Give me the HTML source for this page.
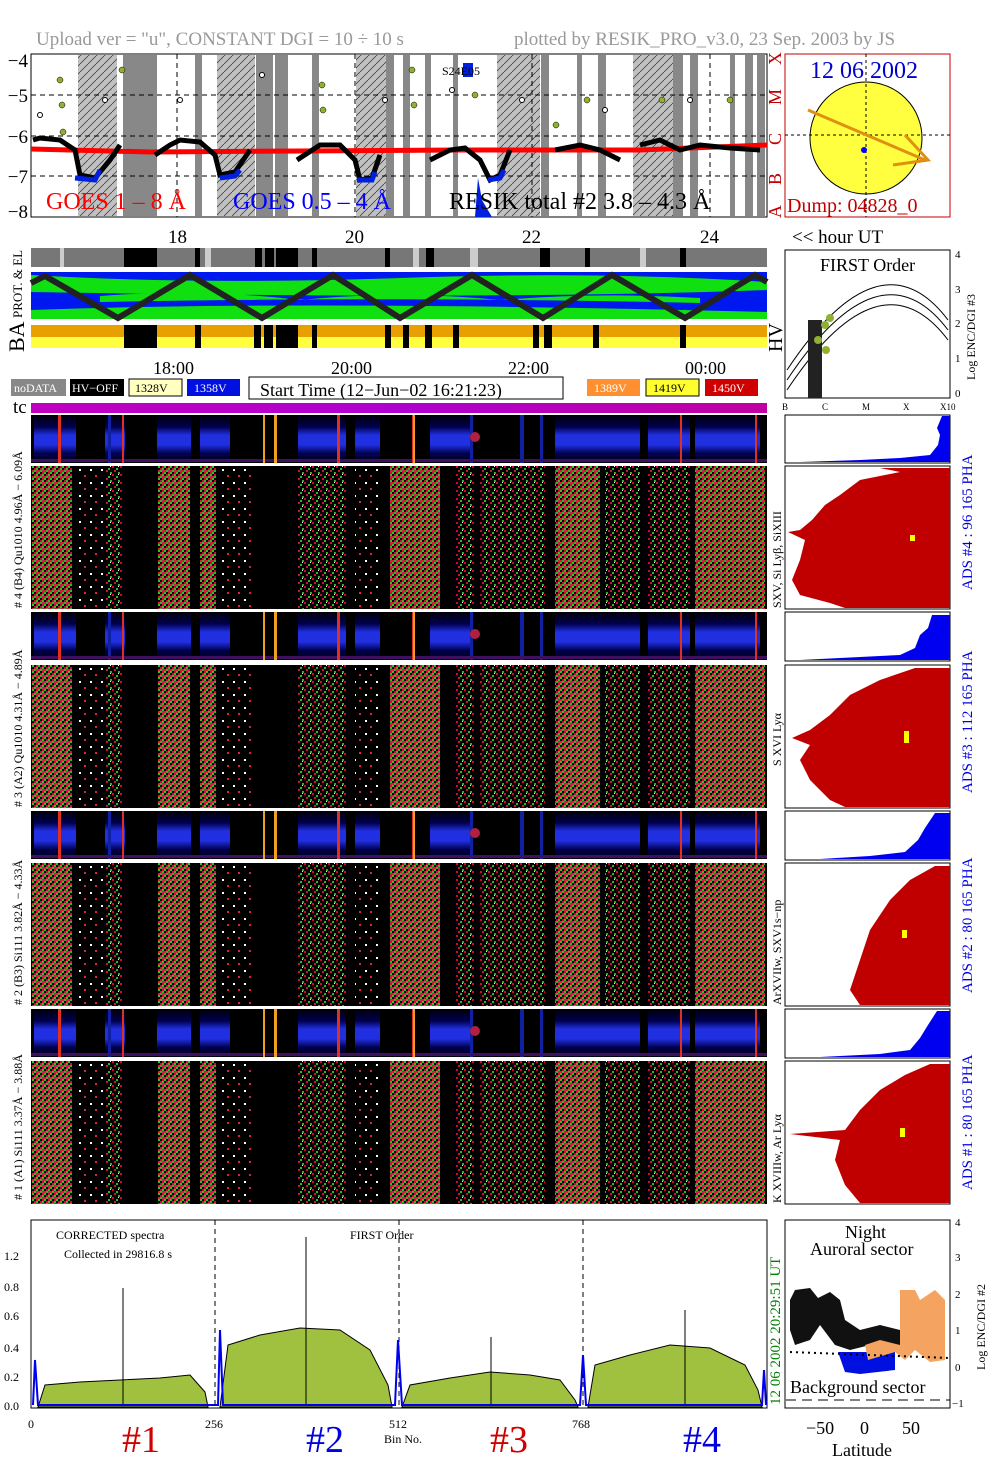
<!DOCTYPE html>
<html><head><meta charset="utf-8"><style>
html,body{margin:0;padding:0;background:#fff;}
svg{display:block;font-family:"Liberation Serif",serif;}
</style></head><body>
<svg width="1004" height="1477" viewBox="0 0 1004 1477" xmlns="http://www.w3.org/2000/svg">
<defs>
<pattern id="hatch" width="8" height="8" patternUnits="userSpaceOnUse"><rect width="8" height="8" fill="#c0c0c0"/><path d="M0 8L8 0" stroke="#333" stroke-width="0.7"/></pattern>
<pattern id="dense" width="6" height="6" patternUnits="userSpaceOnUse"><rect width="6" height="6" fill="#000"/><rect x="0" y="0" width="2" height="2" fill="#e80030"/><rect x="2" y="0" width="2" height="2" fill="#20d020"/><rect x="0" y="2" width="2" height="2" fill="#30c020"/><rect x="4" y="2" width="2" height="2" fill="#e00040"/><rect x="0" y="4" width="2" height="2" fill="#c02060"/><rect x="2" y="4" width="2" height="2" fill="#f01030"/><rect x="4" y="4" width="2" height="2" fill="#20c020"/></pattern>
<pattern id="mid" width="8" height="8" patternUnits="userSpaceOnUse"><rect width="8" height="8" fill="#000"/><rect x="0" y="0" width="2" height="2" fill="#e00030"/><rect x="4" y="2" width="2" height="2" fill="#20c020"/><rect x="2" y="4" width="2" height="2" fill="#d01040"/><rect x="6" y="6" width="2" height="2" fill="#30b020"/><rect x="6" y="0" width="1" height="1" fill="#fff"/></pattern>
<pattern id="sparse" width="11" height="13" patternUnits="userSpaceOnUse"><rect width="11" height="13" fill="#000"/><rect x="2" y="3" width="2" height="2" fill="#fff"/><rect x="7" y="9" width="2" height="2" fill="#e02040"/></pattern>
<linearGradient id="mag" x1="0" x2="1"><stop offset="0" stop-color="#c000c0"/><stop offset="0.5" stop-color="#b000d0"/><stop offset="1" stop-color="#c000a0"/></linearGradient>
<linearGradient id="bluev" x1="0" y1="0" x2="0" y2="1"><stop offset="0" stop-color="#000008"/><stop offset="0.25" stop-color="#000050"/><stop offset="0.42" stop-color="#2030e0"/><stop offset="0.62" stop-color="#2030e0"/><stop offset="0.8" stop-color="#000050"/><stop offset="1" stop-color="#000010"/></linearGradient>
<g id="dcols">
<rect x="32" y="0" width="40" height="143" fill="url(#dense)"/>
<rect x="76" y="0" width="28" height="143" fill="url(#sparse)"/>
<rect x="106" y="0" width="16" height="143" fill="url(#mid)"/>
<rect x="158" y="0" width="32" height="143" fill="url(#dense)"/>
<rect x="200" y="0" width="16" height="143" fill="url(#dense)"/>
<rect x="218" y="0" width="36" height="143" fill="url(#sparse)"/>
<rect x="298" y="0" width="48" height="143" fill="url(#mid)"/>
<rect x="355" y="0" width="25" height="143" fill="url(#sparse)"/>
<rect x="390" y="0" width="50" height="143" fill="url(#dense)"/>
<rect x="456" y="0" width="18" height="143" fill="url(#mid)"/>
<rect x="480" y="0" width="65" height="143" fill="url(#mid)"/>
<rect x="555" y="0" width="45" height="143" fill="url(#dense)"/>
<rect x="605" y="0" width="35" height="143" fill="url(#mid)"/>
<rect x="648" y="0" width="42" height="143" fill="url(#mid)"/>
<rect x="695" y="0" width="70" height="143" fill="url(#dense)"/>
</g>
<g id="pha">
<rect x="31" y="0" width="736" height="48" fill="#000"/>
<g fill="url(#bluev)">
<rect x="34" y="0" width="42" height="48"/><rect x="105" y="0" width="20" height="48"/>
<rect x="157" y="0" width="34" height="48"/><rect x="200" y="0" width="30" height="48"/>
<rect x="298" y="0" width="48" height="48"/><rect x="355" y="0" width="25" height="48"/>
<rect x="430" y="0" width="40" height="48"/><rect x="555" y="0" width="85" height="48"/>
<rect x="648" y="0" width="42" height="48"/><rect x="695" y="0" width="65" height="48"/>
</g>
<g fill="#1020a0"><rect x="470" y="0" width="3" height="48"/><rect x="520" y="0" width="4" height="48"/><rect x="540" y="0" width="3" height="48"/><rect x="108" y="0" width="3" height="48"/></g>
<rect x="31" y="44" width="736" height="3" fill="#401060"/>
<g fill="#e03020"><rect x="58" y="0" width="3" height="48"/><rect x="122" y="0" width="2" height="48"/><rect x="337" y="0" width="3" height="48"/><rect x="412" y="0" width="3" height="48"/><rect x="680" y="0" width="2" height="48"/><rect x="755" y="0" width="2" height="48"/></g>
<g fill="#f0a020"><rect x="263" y="0" width="2" height="48"/><rect x="274" y="0" width="3" height="48"/><rect x="413" y="0" width="2" height="48"/></g>
<ellipse cx="475" cy="22" rx="5" ry="5" fill="#b02040"/>
</g>
</defs>

<text x="36" y="45" font-size="19" fill="#999">Upload ver = "u", CONSTANT  DGI =  10 ÷  10 s</text>
<text x="514" y="45" font-size="19" fill="#999">plotted by RESIK_PRO_v3.0, 23 Sep. 2003 by JS</text>

<rect x="31" y="54" width="736" height="163" fill="#fff" stroke="#000"/>
<g fill="url(#hatch)"><rect x="78" y="55" width="39" height="161"/><rect x="217" y="55" width="38" height="161"/><rect x="356" y="55" width="30" height="161"/><rect x="497" y="55" width="43" height="161"/><rect x="633" y="55" width="40" height="161"/></g>
<g fill="#888"><rect x="123" y="55" width="34" height="161"/><rect x="195" y="55" width="7" height="161"/><rect x="256" y="55" width="17" height="161"/><rect x="275" y="55" width="13" height="161"/><rect x="312" y="55" width="7" height="161"/><rect x="386" y="55" width="8" height="161"/><rect x="403" y="55" width="7" height="161"/><rect x="425" y="55" width="6" height="161"/><rect x="453" y="55" width="5" height="161"/><rect x="541" y="55" width="8" height="161"/><rect x="577" y="55" width="5" height="161"/><rect x="598" y="55" width="8" height="161"/><rect x="673" y="55" width="10" height="161"/><rect x="690" y="55" width="8" height="161"/><rect x="730" y="55" width="5" height="161"/><rect x="745" y="55" width="8" height="161"/><rect x="757" y="55" width="8" height="161"/></g>
<g stroke="#000" stroke-dasharray="5,4" stroke-width="1"><line x1="31" y1="95" x2="767" y2="95"/><line x1="31" y1="136" x2="767" y2="136"/><line x1="31" y1="176" x2="767" y2="176"/><line x1="177" y1="54" x2="177" y2="217"/><line x1="355" y1="54" x2="355" y2="217"/><line x1="532" y1="54" x2="532" y2="217"/><line x1="710" y1="54" x2="710" y2="217"/></g>
<path d="M31 149 L150 152 L300 151 L460 150 L640 150 L767 145" stroke="#f00" stroke-width="5" fill="none"/>
<path d="M33 140 L40 138 L60 140 L75 150 L80 175 L95 178 L110 160 L120 145 M155 155 L170 145 L180 140 L200 142 L215 155 L220 175 L235 172 L250 150 M297 160 L320 145 L340 145 L355 160 L360 180 L372 178 L380 155 M430 160 L450 150 L465 148 L480 160 L490 180 L500 175 L510 150 M555 150 L580 145 L600 150 L620 160 M640 145 L660 140 L680 150 L700 145 L730 148 L760 150" stroke="#000" stroke-width="5" fill="none"/>
<path d="M75 178 L95 180 L100 170 M220 178 L235 176 L240 170 M357 180 L372 180 L375 172 M488 180 L500 178 L504 170" stroke="#0020e0" stroke-width="5" fill="none"/>
<g fill="#90b030" stroke="#000" stroke-width="0.5"><circle cx="60" cy="80" r="3"/><circle cx="62" cy="105" r="3"/><circle cx="63" cy="132" r="3"/><circle cx="122" cy="70" r="3"/><circle cx="322" cy="85" r="3"/><circle cx="323" cy="110" r="3"/><circle cx="412" cy="70" r="3"/><circle cx="414" cy="105" r="3"/><circle cx="475" cy="95" r="3"/><circle cx="587" cy="100" r="3"/><circle cx="662" cy="100" r="3"/><circle cx="730" cy="100" r="3"/><circle cx="556" cy="125" r="3"/></g>
<g fill="#fff" stroke="#000"><circle cx="40" cy="115" r="2.5"/><circle cx="105" cy="100" r="2.5"/><circle cx="180" cy="100" r="2.5"/><circle cx="262" cy="75" r="2.5"/><circle cx="385" cy="100" r="2.5"/><circle cx="452" cy="90" r="2.5"/><circle cx="522" cy="100" r="2.5"/><circle cx="605" cy="110" r="2.5"/><circle cx="690" cy="100" r="2.5"/></g>
<path d="M475 217 L478 178 L482 200 L492 217 Z" fill="#0020e0"/>
<rect x="463" y="63" width="10" height="14" fill="#0020e0"/>
<text x="442" y="75" font-size="12">S24E05</text>
<text x="46" y="209" font-size="24" fill="#f00">GOES 1 – 8 Å</text>
<text x="233" y="209" font-size="24" fill="#00f">GOES 0.5 – 4 Å</text>
<text x="449" y="209" font-size="24">RESIK total #2  3.8 – 4.3 Å</text>
<g font-size="19" text-anchor="end"><text x="28" y="67">−4</text><text x="28" y="102">−5</text><text x="28" y="143">−6</text><text x="28" y="183">−7</text><text x="28" y="218">−8</text></g>
<g font-size="18" fill="#c00000" transform="rotate(-90)"><text x="-218" y="781">A</text><text x="-185" y="781">B</text><text x="-145" y="781">C</text><text x="-105" y="781">M</text><text x="-65" y="781">X</text></g>
<rect x="785" y="54" width="165" height="163" fill="#fff" stroke="#c00000"/>
<circle cx="866" cy="138" r="56" fill="#ffff40" stroke="#000"/>
<line x1="785" y1="135" x2="950" y2="135" stroke="#000" stroke-dasharray="3,3"/><line x1="866" y1="54" x2="866" y2="217" stroke="#000" stroke-dasharray="3,3"/>
<path d="M808 110 L925 160 M893 165 L928 160 L905 135" stroke="#e09010" stroke-width="3" fill="none"/>
<circle cx="864" cy="150" r="3" fill="#00f"/>
<text x="810" y="78" font-size="24" fill="#0000d0">12 06 2002</text>
<text x="787" y="212" font-size="20" fill="#c00000">Dump: 04828_0</text>
<g font-size="19"><text x="168" y="243">18</text><text x="345" y="243">20</text><text x="522" y="243">22</text><text x="700" y="243">24</text><text x="792" y="243">&lt;&lt; hour UT</text></g>
<rect x="31" y="248" width="736" height="19" fill="#777"/>
<g fill="#000"><rect x="124" y="248" width="33" height="19"/><rect x="195" y="248" width="5" height="19"/><rect x="255" y="248" width="7" height="19"/><rect x="265" y="248" width="9" height="19"/><rect x="276" y="248" width="22" height="19"/><rect x="312" y="248" width="5" height="19"/><rect x="385" y="248" width="5" height="19"/><rect x="426" y="248" width="8" height="19"/><rect x="540" y="248" width="10" height="19"/><rect x="585" y="248" width="5" height="19"/><rect x="680" y="248" width="6" height="19"/></g>
<g fill="#ccc"><rect x="60" y="248" width="4" height="19"/><rect x="205" y="248" width="6" height="19"/><rect x="413" y="248" width="6" height="19"/><rect x="470" y="248" width="8" height="19"/><rect x="640" y="248" width="6" height="19"/></g>
<rect x="31" y="272" width="736" height="47" fill="#0018f0"/>
<path d="M31 275 Q200 285 400 278 T767 282 L767 290 Q500 300 31 292 Z M31 310 Q300 300 767 312 L767 319 L31 319 Z M100 296 Q200 288 300 300 Q400 290 500 300 Q600 292 700 298 L700 303 Q400 296 100 302Z" fill="#10e010"/>
<path d="M31 283 L45 276 L118 318 L190 275 L262 318 L333 275 L400 318 L472 275 L543 318 L612 275 L685 318 L755 275 L767 282" stroke="#222" stroke-width="6" fill="none"/>
<rect x="31" y="325" width="736" height="23" fill="#e8a000"/><rect x="31" y="337" width="736" height="11" fill="#ffff40"/>
<g fill="#000"><rect x="124" y="325" width="33" height="23"/><rect x="195" y="325" width="6" height="23"/><rect x="254" y="325" width="7" height="23"/><rect x="264" y="325" width="9" height="23"/><rect x="276" y="325" width="22" height="23"/><rect x="312" y="325" width="5" height="23"/><rect x="385" y="325" width="6" height="23"/><rect x="403" y="325" width="6" height="23"/><rect x="425" y="325" width="7" height="23"/><rect x="453" y="325" width="6" height="23"/><rect x="533" y="325" width="6" height="23"/><rect x="544" y="325" width="8" height="23"/><rect x="593" y="325" width="6" height="23"/><rect x="680" y="325" width="6" height="23"/></g>
<text transform="translate(22,318) rotate(-90)" font-size="13">PROT. &amp; EL</text>
<text transform="translate(24,352) rotate(-90)" font-size="22">BA</text>
<text transform="translate(782,352) rotate(-90)" font-size="20">HV</text>
<rect x="785" y="250" width="165" height="148" fill="#fff" stroke="#000"/>
<text x="820" y="271" font-size="18">FIRST Order</text>
<path d="M787 380 Q880 240 948 330 M787 370 Q880 230 948 320 M787 390 Q880 250 948 340" stroke="#000" fill="none"/>
<rect x="808" y="320" width="14" height="78" fill="#222"/>
<g fill="#90b030"><circle cx="825" cy="325" r="4"/><circle cx="830" cy="318" r="4"/><circle cx="818" cy="340" r="4"/><circle cx="826" cy="350" r="4"/></g>
<g font-size="9"><text x="782" y="410">B</text><text x="822" y="410">C</text><text x="862" y="410">M</text><text x="903" y="410">X</text><text x="940" y="410">X10</text></g>
<g font-size="11"><text x="955" y="258">4</text><text x="955" y="293">3</text><text x="955" y="327">2</text><text x="955" y="362">1</text><text x="955" y="397">0</text></g>
<text transform="translate(975,380) rotate(-90)" font-size="12">Log ENC/DGI #3</text>
<g font-size="18"><text x="153" y="374">18:00</text><text x="331" y="374">20:00</text><text x="508" y="374">22:00</text><text x="685" y="374">00:00</text></g>
<g font-size="12"><rect x="11" y="379" width="55" height="17" fill="#888"/><text x="14" y="392" fill="#fff">noDATA</text>
<rect x="70" y="379" width="54" height="17" fill="#000"/><text x="72" y="392" fill="#fff">HV−OFF</text>
<rect x="129" y="379" width="53" height="17" fill="#ffffc0" stroke="#000"/><text x="135" y="392">1328V</text>
<rect x="187" y="379" width="53" height="17" fill="#0010e0"/><text x="194" y="392" fill="#fff">1358V</text>
<rect x="587" y="379" width="53" height="17" fill="#ff9030"/><text x="594" y="392" fill="#fff">1389V</text>
<rect x="646" y="379" width="53" height="17" fill="#ffff30" stroke="#000"/><text x="653" y="392" fill="#000">1419V</text>
<rect x="705" y="379" width="53" height="17" fill="#d00000"/><text x="712" y="392" fill="#fff">1450V</text></g>
<rect x="249" y="377" width="314" height="22" fill="#fff" stroke="#000"/>
<text x="260" y="396" font-size="18">Start Time (12−Jun−02 16:21:23)</text>
<text x="13" y="413" font-size="19">tc</text>
<rect x="31" y="403" width="736" height="10" fill="url(#mag)"/>

<use href="#pha" y="415"/>
<rect x="31" y="466" width="736" height="143" fill="#000"/>
<use href="#dcols" y="466"/>
<use href="#pha" y="612"/>
<rect x="31" y="665" width="736" height="143" fill="#000"/>
<use href="#dcols" y="665"/>
<use href="#pha" y="811"/>
<rect x="31" y="863" width="736" height="143" fill="#000"/>
<use href="#dcols" y="863"/>
<use href="#pha" y="1009"/>
<rect x="31" y="1061" width="736" height="143" fill="#000"/>
<use href="#dcols" y="1061"/>

<g font-size="12">
<text transform="translate(22,608) rotate(-90)"># 4 (B4) Qu1010 4.96Å − 6.09Å</text>
<text transform="translate(22,807) rotate(-90)"># 3 (A2) Qu1010  4.31Å − 4.89Å</text>
<text transform="translate(22,1005) rotate(-90)"># 2 (B3) Si111  3.82Å − 4.33Å</text>
<text transform="translate(22,1200) rotate(-90)"># 1 (A1) Si111  3.37Å − 3.88Å</text>
<text transform="translate(781,608) rotate(-90)">SXV, Si Lyβ, SiXIII</text>
<text transform="translate(781,766) rotate(-90)">S XVI Lyα</text>
<text transform="translate(781,1005) rotate(-90)">ArXVIIw, SXV1s−np</text>
<text transform="translate(781,1203) rotate(-90)">K XVIIIw, Ar Lyα</text>
</g>
<g font-size="15" fill="#0000e0">
<text transform="translate(972,590) rotate(-90)">ADS #4 :   96 165  PHA</text>
<text transform="translate(972,793) rotate(-90)">ADS #3 :   112 165   PHA</text>
<text transform="translate(972,993) rotate(-90)">ADS #2 :   80 165    PHA</text>
<text transform="translate(972,1190) rotate(-90)">ADS #1 :   80 165    PHA</text>
</g>
<g stroke="#000" fill="#fff">
<rect x="785" y="415" width="165" height="48"/><rect x="785" y="466" width="165" height="143"/>
<rect x="785" y="612" width="165" height="49"/><rect x="785" y="665" width="165" height="143"/>
<rect x="785" y="811" width="165" height="49"/><rect x="785" y="863" width="165" height="143"/>
<rect x="785" y="1009" width="165" height="49"/><rect x="785" y="1061" width="165" height="143"/>
</g>
<g fill="#0000f0">
<path d="M800 462 L860 460 L900 458 L930 455 L938 445 L940 435 L937 428 L942 416 L950 416 L950 462Z"/>
<path d="M800 660 L860 657 L900 655 L915 648 L920 635 L928 628 L932 615 L950 615 L950 660Z"/>
<path d="M820 859 L870 856 L905 852 L918 840 L925 828 L935 813 L950 813 L950 859Z"/>
<path d="M820 1057 L880 1054 L910 1050 L920 1038 L928 1025 L937 1011 L950 1011 L950 1057Z"/>
</g>
<g fill="#c00000">
<path d="M950 468 L880 468 L900 472 L860 480 L840 495 L825 505 L812 520 L800 530 L788 532 L805 540 L800 560 L792 580 L800 595 L830 603 L845 608 L950 608Z"/>
<path d="M950 668 L915 668 L880 680 L850 695 L830 715 L810 730 L792 738 L810 745 L800 760 L810 780 L830 800 L845 807 L950 807Z"/>
<path d="M950 866 L935 866 L910 880 L890 900 L870 930 L860 960 L850 990 L860 1005 L950 1005Z"/>
<path d="M950 1064 L930 1064 L905 1075 L880 1090 L860 1110 L845 1130 L790 1134 L840 1140 L835 1160 L845 1185 L860 1203 L950 1203Z"/>
</g>
<g fill="#ffff00"><rect x="910" y="535" width="5" height="6"/><rect x="904" y="731" width="5" height="12"/><rect x="902" y="930" width="5" height="8"/><rect x="900" y="1128" width="5" height="9"/></g>

<rect x="31" y="1220" width="736" height="188" fill="#fff" stroke="#000"/>
<g fill="#a0c040" stroke="#000" stroke-width="1">
<path d="M38 1407 L45 1385 L80 1382 L120 1380 L160 1378 L190 1375 L205 1392 L208 1407Z"/>
<path d="M220 1407 L228 1345 L260 1335 L300 1328 L340 1330 L370 1350 L388 1385 L392 1407Z"/>
<path d="M402 1407 L410 1385 L450 1378 L490 1372 L530 1375 L560 1380 L575 1400 L578 1407Z"/>
<path d="M588 1407 L595 1365 L630 1355 L670 1345 L710 1348 L745 1365 L758 1390 L762 1407Z"/>
</g>
<g stroke="#000"><line x1="123" y1="1288" x2="123" y2="1405"/><line x1="306" y1="1237" x2="306" y2="1405"/><line x1="491" y1="1337" x2="491" y2="1405"/><line x1="685" y1="1310" x2="685" y2="1405"/></g>
<g stroke="#000" stroke-dasharray="5,4"><line x1="215" y1="1220" x2="215" y2="1408"/><line x1="399" y1="1220" x2="399" y2="1408"/><line x1="583" y1="1220" x2="583" y2="1408"/></g>
<path d="M33 1405 L35 1360 L38 1405 L218 1405 L220 1330 L223 1405 L395 1405 L398 1340 L402 1405 L580 1405 L583 1355 L586 1405 L762 1405 L764 1370 L766 1405" stroke="#0000f0" stroke-width="2" fill="none"/>
<g font-size="12"><text x="56" y="1239">CORRECTED spectra</text><text x="64" y="1258">Collected in 29816.8 s</text><text x="350" y="1239">FIRST Order</text>
<text x="4" y="1260">1.2</text><text x="4" y="1291">0.8</text><text x="4" y="1320">0.6</text><text x="4" y="1352">0.4</text><text x="4" y="1381">0.2</text><text x="4" y="1410">0.0</text>
<text x="28" y="1428">0</text><text x="205" y="1428">256</text><text x="389" y="1428">512</text><text x="572" y="1428">768</text><text x="384" y="1443">Bin No.</text></g>
<g font-size="38"><text x="122" y="1452" fill="#d00000">#1</text><text x="306" y="1452" fill="#0000e0">#2</text><text x="490" y="1452" fill="#d00000">#3</text><text x="683" y="1452" fill="#0000e0">#4</text></g>
<text transform="translate(780,1405) rotate(-90)" font-size="15" fill="#008000">12 06 2002       20:29:51 UT</text>
<rect x="785" y="1220" width="165" height="188" fill="#fff" stroke="#000"/>
<text x="845" y="1238" font-size="18">Night</text><text x="810" y="1255" font-size="18">Auroral sector</text>
<text x="790" y="1393" font-size="18">Background sector</text>
<path d="M790 1300 L795 1290 L810 1288 L818 1298 L830 1292 L840 1300 L845 1320 L860 1330 L880 1325 L900 1330 L905 1345 L870 1345 L850 1350 L835 1345 L820 1325 L810 1340 L795 1345 L790 1330 Z" fill="#111"/>
<path d="M838 1352 L870 1352 L895 1350 L895 1370 L860 1374 L845 1372 Z" fill="#0010e0"/>
<path d="M865 1345 L880 1340 L900 1345 L900 1290 L915 1290 L920 1300 L935 1290 L945 1300 L945 1360 L930 1362 L915 1350 L905 1360 L895 1352 L868 1360 Z" fill="#f4a460"/>
<path d="M790 1352 L950 1358" stroke="#000" stroke-dasharray="2,4" stroke-width="2"/>
<path d="M786 1400 L950 1400" stroke="#000" stroke-dasharray="10,6"/>
<g font-size="18"><text x="806" y="1434">−50</text><text x="860" y="1434">0</text><text x="902" y="1434">50</text><text x="832" y="1456">Latitude</text></g>
<g font-size="11"><text x="955" y="1226">4</text><text x="955" y="1261">3</text><text x="955" y="1298">2</text><text x="955" y="1334">1</text><text x="955" y="1371">0</text><text x="952" y="1407">−1</text></g>
<text transform="translate(985,1370) rotate(-90)" font-size="12">Log ENC/DGI #2</text>
</svg>
</body></html>
